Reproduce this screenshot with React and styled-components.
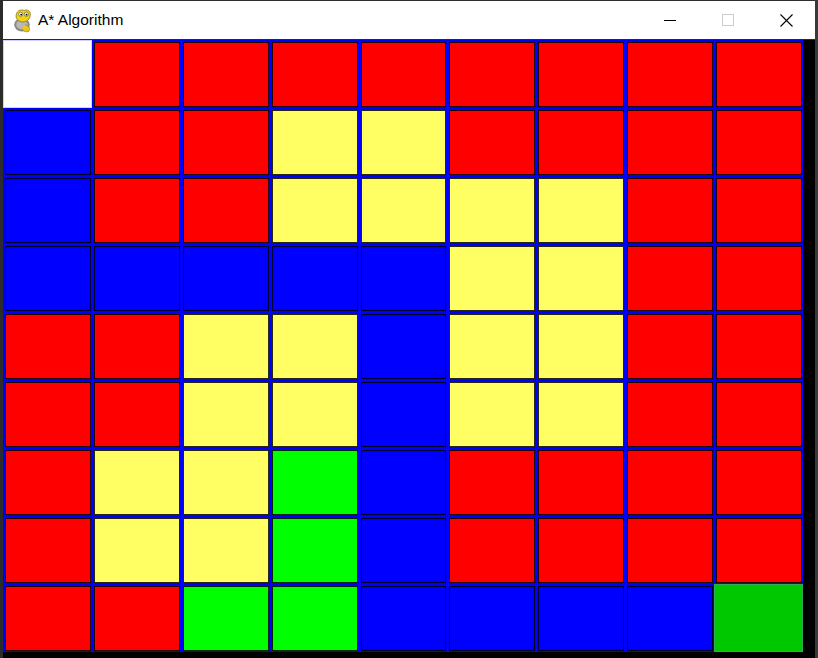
import React from "react";
import styled, { createGlobalStyle } from "styled-components";

const Global = createGlobalStyle`
  html, body { margin: 0; padding: 0; background: #1f1f1f; }
  body { width: 818px; height: 658px; overflow: hidden; font-family: "Liberation Sans", Arial, sans-serif; }
`;

const Screen = styled.div`
  display: flex;
  width: 818px;
  height: 658px;
  background: #1f1f1f;
`;

const LeftEdge = styled.div`
  width: 3px;
  background: #2b2b2b;
`;

const RightEdge = styled.div`
  width: 3px;
  background: #3a3a3a;
`;

const Window = styled.div`
  width: 812px;
  display: flex;
  flex-direction: column;
  background: #000;
`;

const TitleBar = styled.div`
  height: 38px;
  border-top: 1px solid #2e2e2e;
  border-bottom: 1px solid #2a2a2a;
  background: #fff;
  display: flex;
  align-items: center;
`;

const AppIcon = styled.svg`
  margin-left: 9px;
  width: 22px;
  height: 25px;
  flex: none;
`;

const Title = styled.span`
  margin-left: 4px;
  font-size: 15.5px;
  color: #000;
  flex: 1;
  white-space: nowrap;
`;

const CtrlButton = styled.div`
  width: 58px;
  height: 38px;
  display: flex;
  align-items: center;
  justify-content: center;
`;

const Body = styled.div`
  display: flex;
  height: 612px;
`;

const Canvas = styled.div`
  width: 800px;
  height: 612px;
  display: grid;
  grid-template-columns: repeat(9, 1fr);
  grid-template-rows: repeat(9, 68px);
  background: #0000ff;
`;

const Cell = styled.div`
  padding: ${(p) => (p.$full ? "0" : "2px 1px 1px 2px")};
  display: flex;
`;

const Fill = styled.div`
  flex: 1;
  background: ${(p) => p.$color};
  border: ${(p) => (p.$full ? "none" : "1px solid rgba(0,0,0,0.85)")};
  box-shadow: ${(p) => (p.$full ? "inset 0 0 0 1px rgba(120,120,255,0.35)" : "none")};
`;

const COLORS = {
  S: "#ffffff",
  R: "#ff0000",
  Y: "#ffff64",
  B: "#0000ff",
  G: "#00ff00",
  E: "#00c800",
};

const GRID = [
  "SRRRRRRRR",
  "BRRYYRRRR",
  "BRRYYYYRR",
  "BBBBBYYRR",
  "RRYYBYYRR",
  "RRYYBYYRR",
  "RYYGBRRRR",
  "RYYGBRRRR",
  "RRGGBBBBE",
];

function PygameIcon() {
  return (
    <AppIcon viewBox="0 0 20 24">
      <ellipse cx="9" cy="16" rx="7.5" ry="6.5" fill="#8a8a8a" />
      <ellipse cx="9" cy="16" rx="5.5" ry="4.5" fill="#b8b8b8" />
      <path d="M3.5 9 C2.5 3 8 0.5 11 2.5 C15 0.5 18.5 4 16.5 9 C15.5 12 12 13.5 10 13.5 C7 13.5 4.5 12 3.5 9 Z" fill="#f2d21b" stroke="#8c7a10" strokeWidth="0.8" />
      <circle cx="7.8" cy="6" r="2" fill="#fff" stroke="#333" strokeWidth="0.5" />
      <circle cx="13.2" cy="6" r="2" fill="#fff" stroke="#333" strokeWidth="0.5" />
      <circle cx="8.2" cy="6.3" r="0.9" fill="#000" />
      <circle cx="13.4" cy="6.3" r="0.9" fill="#000" />
      <path d="M12 16 C15.5 17 17.5 19.5 15.5 22.5 C13 23.5 10 22.5 9 20" fill="#e8c91a" stroke="#8c7a10" strokeWidth="0.6" />
    </AppIcon>
  );
}

export default function App() {
  return (
    <>
      <Global />
      <Screen>
        <LeftEdge />
        <Window>
          <TitleBar>
            <PygameIcon />
            <Title>A* Algorithm</Title>
            <CtrlButton>
              <svg width="12" height="12" viewBox="0 0 12 12">
                <line x1="0" y1="6.5" x2="12" y2="6.5" stroke="#000" strokeWidth="1" />
              </svg>
            </CtrlButton>
            <CtrlButton>
              <svg width="12" height="12" viewBox="0 0 12 12">
                <rect x="0.5" y="0.5" width="11" height="11" fill="none" stroke="#cccccc" strokeWidth="1" />
              </svg>
            </CtrlButton>
            <CtrlButton>
              <svg width="13" height="13" viewBox="0 0 13 13">
                <line x1="0.5" y1="0.5" x2="12.5" y2="12.5" stroke="#000" strokeWidth="1.1" />
                <line x1="12.5" y1="0.5" x2="0.5" y2="12.5" stroke="#000" strokeWidth="1.1" />
              </svg>
            </CtrlButton>
          </TitleBar>
          <Body>
            <Canvas>
              {GRID.flatMap((row, r) =>
                row.split("").map((k, c) => {
                  const full = k === "S" || k === "E";
                  return (
                    <Cell key={`${r}-${c}`} $full={full}>
                      <Fill $color={COLORS[k]} $full={full} />
                    </Cell>
                  );
                })
              )}
            </Canvas>
          </Body>
        </Window>
        <RightEdge />
      </Screen>
    </>
  );
}
